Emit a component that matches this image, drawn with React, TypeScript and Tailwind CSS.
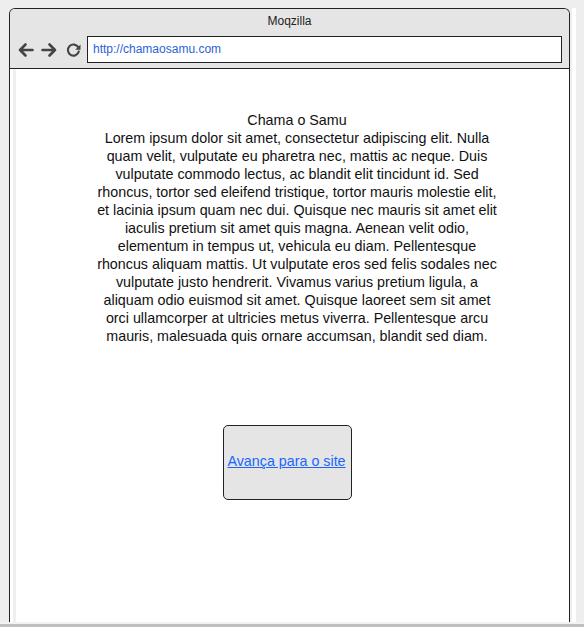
const lines = [
  'Lorem ipsum dolor sit amet, consectetur adipiscing elit. Nulla',
  'quam velit, vulputate eu pharetra nec, mattis ac neque. Duis',
  'vulputate commodo lectus, ac blandit elit tincidunt id. Sed',
  'rhoncus, tortor sed eleifend tristique, tortor mauris molestie elit,',
  'et lacinia ipsum quam nec dui. Quisque nec mauris sit amet elit',
  'iaculis pretium sit amet quis magna. Aenean velit odio,',
  'elementum in tempus ut, vehicula eu diam. Pellentesque',
  'rhoncus aliquam mattis. Ut vulputate eros sed felis sodales nec',
  'vulputate justo hendrerit. Vivamus varius pretium ligula, a',
  'aliquam odio euismod sit amet. Quisque laoreet sem sit amet',
  'orci ullamcorper at ultricies metus viverra. Pellentesque arcu',
  'mauris, malesuada quis ornare accumsan, blandit sed diam.',
]

function BackIcon() {
  return (
    <svg width="17" height="16" viewBox="0 0 17 16" fill="none">
      <path d="M15.5 8H3M8.5 2.5L3 8l5.5 5.5" stroke="#444" strokeWidth="2.6" strokeLinecap="round" strokeLinejoin="round" />
    </svg>
  )
}

function ForwardIcon() {
  return (
    <svg width="17" height="16" viewBox="0 0 17 16" fill="none">
      <path d="M1.5 8H14M8.5 2.5L14 8l-5.5 5.5" stroke="#444" strokeWidth="2.6" strokeLinecap="round" strokeLinejoin="round" />
    </svg>
  )
}

function ReloadIcon() {
  return (
    <svg width="17" height="17" viewBox="0 0 16 16" fill="none">
      <path d="M12.6 6.2A5.2 5.2 0 1 0 13 9.8" stroke="#444" strokeWidth="2" strokeLinecap="round" />
      <path d="M14.6 3.2v5h-5z" fill="#444" />
    </svg>
  )
}

export default function App() {
  return (
    <div className="flex h-[627px] w-[584px] flex-col overflow-hidden bg-[#eeeeee] font-['Liberation_Sans',Arial,sans-serif]">
      <div className="flex min-h-0 flex-1 pl-[9px] pt-[8px]">
        <div className="flex w-[561px] flex-col rounded-t-[6px] border border-b-0 border-[#222]">
          <div className="h-[60px] shrink-0 rounded-t-[5px] border-b border-[#222] bg-[#e5e5e5]">
            <div className="pt-[5px] text-center text-[12px] leading-[14px] text-[#222]">Moqzilla</div>
            <div className="mt-[8px] flex items-center">
              <div className="ml-[7px] flex w-[70px] items-center gap-[7px]">
                <BackIcon />
                <ForwardIcon />
                <ReloadIcon />
              </div>
              <div className="h-[27px] w-[475px] border border-[#222] bg-white pl-[5px] text-[12px] leading-[25px] text-[#2b63d9]">
                http://chamaosamu.com
              </div>
            </div>
          </div>
          <div className="flex min-h-0 flex-1 bg-white">
            <div className="ml-[3px] w-[3px] bg-[#efefef]" />
            <div className="flex flex-1 flex-col">
              <div className="ml-[76px] mt-[42px] w-[410px] text-center text-[14.3px] leading-[18px] text-[#111]">
                <div>Chama o Samu</div>
                {lines.map((line) => (
                  <div key={line} className="whitespace-nowrap">
                    {line}
                  </div>
                ))}
              </div>
              <div className="ml-[207px] mt-[80px] flex h-[75px] w-[129px] items-center justify-center rounded-[5px] border border-[#222] bg-[#e5e5e5] pb-[3px] pr-[2px]">
                <a href="#" className="text-[14.3px] leading-[18px] text-[#1a66ff] underline">
                  Avança para o site
                </a>
              </div>
            </div>
          </div>
        </div>
        <div className="ml-[2px] w-[4px] bg-white" />
      </div>
      <div className="h-[2px] bg-[#f2f2f2]" />
      <div className="h-[3px] bg-[#c0c0c0]" />
    </div>
  )
}
